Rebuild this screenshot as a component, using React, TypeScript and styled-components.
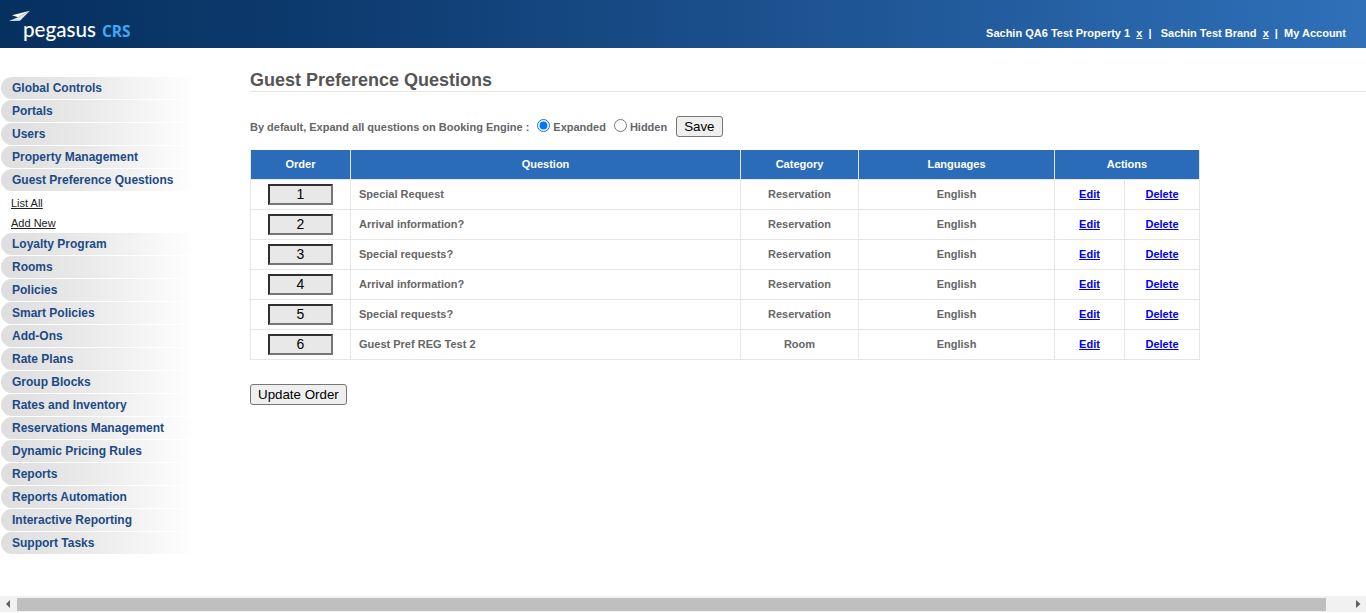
import React from 'react'
import styled, { createGlobalStyle } from 'styled-components'

const GlobalStyle = createGlobalStyle`
  html, body {
    margin: 0;
    padding: 0;
    height: 100%;
    overflow: hidden;
    background: #fff;
    font-family: "Liberation Sans", Arial, sans-serif;
  }
`

const Page = styled.div`
  display: flex;
  flex-direction: column;
  height: 100vh;
`

const Header = styled.header`
  height: 48px;
  flex: none;
  display: flex;
  justify-content: space-between;
  background: linear-gradient(90deg, #05305f 0%, #0e3b70 25%, #2f70b9 100%);
`

const Logo = styled.div`
  position: relative;
  width: 140px;
  padding: 17px 0 0 23px;
  display: flex;
  align-items: baseline;
  gap: 6px;
`

const Plane = styled.svg`
  position: absolute;
  left: 9px;
  top: 10px;
`

const Brand = styled.span`
  font-family: Lato, "Open Sans", sans-serif;
  font-size: 20.6px;
  font-weight: 500;
  line-height: 24px;
  color: #fff;
`

const Crs = styled.span`
  font-family: "Open Sans", sans-serif;
  font-size: 15.5px;
  font-weight: 700;
  color: #3fa9f5;
`

const AccountBar = styled.div`
  display: flex;
  align-items: flex-start;
  padding: 27px 20px 0 0;
  font-size: 11px;
  line-height: 13px;
  font-weight: 700;
  color: #fff;
  white-space: pre;
`

const AccountLink = styled.a`
  color: #fff;
  text-decoration: ${p => (p.$plain ? 'none' : 'underline')};
`

const Body = styled.div`
  flex: 1;
  display: flex;
  min-height: 0;
`

const Sidebar = styled.nav`
  width: 250px;
  flex: none;
  padding: 29px 0 0 1px;
  box-sizing: border-box;
`

const MenuItem = styled.div`
  width: 196px;
  height: 22px;
  margin-bottom: 1px;
  padding-left: 11px;
  box-sizing: border-box;
  border-radius: 11px 0 0 11px;
  background: linear-gradient(90deg, #dedede 0%, #eaeaea 45%, #ffffff 100%);
  font-size: 12px;
  font-weight: 700;
  line-height: 22px;
  color: #1c4a86;
`

const SubMenu = styled.div`
  display: flex;
  flex-direction: column;
  padding: 4px 0 3px 10px;
  gap: 6px;
`

const SubLink = styled.a`
  font-size: 11px;
  line-height: 14px;
  color: #222;
  text-decoration: underline;
  align-self: flex-start;
`

const Content = styled.main`
  flex: 1;
  min-width: 0;
`

const Title = styled.h1`
  margin: 21px 0 0;
  height: 22px;
  border-bottom: 1px solid #e6e6e6;
  font-size: 18px;
  line-height: 22px;
  font-weight: 700;
  color: #555;
`

const OptionRow = styled.div`
  display: flex;
  align-items: center;
  height: 21px;
  margin-top: 24px;
  font-size: 11px;
  font-weight: 700;
  color: #666;
`

const Radio = styled.input.attrs({ type: 'radio', name: 'expand' })`
  width: 13px;
  height: 13px;
  margin: 0 3px 3px 0;
`

const RadioLabel = styled.label`
  display: flex;
  align-items: center;
  margin-right: ${p => p.$gap}px;
`

const Prompt = styled.span`
  margin-right: 8px;
`

const Button = styled.button`
  height: 21px;
  padding: 0 7px;
  box-sizing: border-box;
  border: 1px solid #767676;
  border-radius: 3px;
  background: #efefef;
  font-family: "Liberation Sans", Arial, sans-serif;
  font-size: 13.33px;
  line-height: 17px;
  color: #000;
`

const Table = styled.table`
  width: 949px;
  margin-top: 12px;
  table-layout: fixed;
  border-collapse: collapse;
  font-size: 11px;
  font-weight: 700;
  color: #666;
`

const Th = styled.th`
  height: 27px;
  padding: 0 0 2px;
  border: 1px solid #e6e6e6;
  border-top-color: #fff;
  background: #2a6cb8;
  color: #fff;
  font-size: 11px;
  text-align: center;
`

const Td = styled.td`
  height: 27px;
  padding: 0 ${p => (p.$left ? '8px' : '0')} 2px;
  border: 1px solid #e6e6e6;
  text-align: ${p => (p.$left ? 'left' : 'center')};
`

const OrderCell = styled(Td)`
  height: 29px;
  padding: 0;
`

const ActionLink = styled.a`
  color: #0000ee;
  text-decoration: underline;
`

const OrderInput = styled.input`
  display: block;
  width: 65px;
  height: 21px;
  margin: 0 auto;
  padding: 0 0 2px;
  box-sizing: border-box;
  border: 2px solid;
  border-color: #2f2f2f #767676 #767676 #2f2f2f;
  background: #e8e8e8;
  font-family: "Liberation Sans", Arial, sans-serif;
  font-size: 14px;
  text-align: center;
  color: #000;
`

const UpdateRow = styled.div`
  margin-top: 24px;
`

const ScrollBar = styled.div`
  flex: none;
  height: 16px;
  margin-bottom: 1px;
  display: flex;
  align-items: center;
  background: #f1f1f1;
`

const ScrollArrow = styled.svg`
  flex: none;
  width: 17px;
  height: 16px;
`

const ScrollTrack = styled.div`
  flex: 1;
  height: 100%;
  padding: 2px 0 1px;
  box-sizing: border-box;
  display: flex;
  align-items: stretch;
`

const ScrollThumb = styled.div`
  width: 1309px;
  background: #bfbfbf;
`

const menuTop = ['Global Controls', 'Portals', 'Users', 'Property Management', 'Guest Preference Questions']
const menuBottom = [
  'Loyalty Program', 'Rooms', 'Policies', 'Smart Policies', 'Add-Ons', 'Rate Plans', 'Group Blocks',
  'Rates and Inventory', 'Reservations Management', 'Dynamic Pricing Rules', 'Reports',
  'Reports Automation', 'Interactive Reporting', 'Support Tasks',
]

const questions = [
  { order: 1, text: 'Special Request', category: 'Reservation' },
  { order: 2, text: 'Arrival information?', category: 'Reservation' },
  { order: 3, text: 'Special requests?', category: 'Reservation' },
  { order: 4, text: 'Arrival information?', category: 'Reservation' },
  { order: 5, text: 'Special requests?', category: 'Reservation' },
  { order: 6, text: 'Guest Pref REG Test 2', category: 'Room' },
]

export default function App(): React.ReactElement {
  return (
    <Page>
      <GlobalStyle />
      <Header>
        <Logo>
          <Plane width="22" height="12" viewBox="0 0 22 12">
            <path d="M21 0.7 L3 5.3 L9 7.3 Z" fill="#fff" />
            <path d="M21 0.7 L9 7.3 L0 11 L11 10.7 Z" fill="#dfe4ea" />
          </Plane>
          <Brand>pegasus</Brand>
          <Crs>CRS</Crs>
        </Logo>
        <AccountBar>
          {'Sachin QA6 Test Property 1  '}
          <AccountLink href="#">x</AccountLink>
          {'  |   Sachin Test Brand  '}
          <AccountLink href="#">x</AccountLink>
          {'  |  '}
          <AccountLink href="#" $plain>My Account</AccountLink>
        </AccountBar>
      </Header>
      <Body>
        <Sidebar>
          {menuTop.map(m => <MenuItem key={m}>{m}</MenuItem>)}
          <SubMenu>
            <SubLink href="#">List All</SubLink>
            <SubLink href="#">Add New</SubLink>
          </SubMenu>
          {menuBottom.map(m => <MenuItem key={m}>{m}</MenuItem>)}
        </Sidebar>
        <Content>
          <Title>Guest Preference Questions</Title>
          <OptionRow>
            <Prompt>By default, Expand all questions on Booking Engine :</Prompt>
            <RadioLabel $gap={8}><Radio defaultChecked />Expanded</RadioLabel>
            <RadioLabel $gap={9}><Radio />Hidden</RadioLabel>
            <Button>Save</Button>
          </OptionRow>
          <Table>
            <colgroup>
              <col width="100" />
              <col width="390" />
              <col width="118" />
              <col width="196" />
              <col width="70" />
              <col width="75" />
            </colgroup>
            <thead>
              <tr>
                <Th>Order</Th>
                <Th>Question</Th>
                <Th>Category</Th>
                <Th>Languages</Th>
                <Th colSpan={2}>Actions</Th>
              </tr>
            </thead>
            <tbody>
              {questions.map(q => (
                <tr key={q.order}>
                  <OrderCell><OrderInput defaultValue={q.order} /></OrderCell>
                  <Td $left>{q.text}</Td>
                  <Td>{q.category}</Td>
                  <Td>English</Td>
                  <Td><ActionLink href="#">Edit</ActionLink></Td>
                  <Td><ActionLink href="#">Delete</ActionLink></Td>
                </tr>
              ))}
            </tbody>
          </Table>
          <UpdateRow>
            <Button>Update Order</Button>
          </UpdateRow>
        </Content>
      </Body>
      <ScrollBar>
        <ScrollArrow viewBox="0 0 17 16">
          <path d="M6 8 L10 4 V12 Z" fill="#606060" />
        </ScrollArrow>
        <ScrollTrack><ScrollThumb /></ScrollTrack>
        <ScrollArrow viewBox="0 0 17 16">
          <path d="M11.5 8 L7 4 V12 Z" fill="#606060" />
        </ScrollArrow>
      </ScrollBar>
    </Page>
  )
}
